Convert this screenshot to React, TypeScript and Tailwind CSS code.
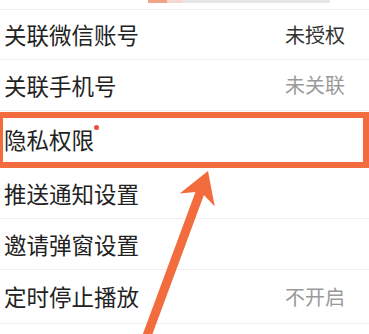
import React from "react";

type Row = { label: string; value?: string; muted?: boolean; dot?: boolean; h: string };

const rows: Row[] = [
  { label: "关联微信账号", value: "未授权", h: "h-[50px]" },
  { label: "关联手机号", value: "未关联", muted: true, h: "h-[51px]" },
  { label: "隐私权限", dot: true, h: "h-[57px]" },
  { label: "推送通知设置", h: "h-[51px]" },
  { label: "邀请弹窗设置", h: "h-[51px]" },
  { label: "定时停止播放", value: "不开启", muted: true, h: "h-[54px]" },
  { label: "", h: "h-[20px]" },
];

function Arrow() {
  // tip, wings and shaft computed along the arrow axis
  const ux = 0.347;
  const uy = -0.9375;
  const nx = 0.9375;
  const ny = 0.347;
  const tip = [208, 171];
  const at = (back: number, side: number) =>
    `${tip[0] - ux * back + nx * side},${tip[1] - uy * back + ny * side}`;
  const bottom = 180;
  const pts = [
    at(0, 0),
    at(31, 18.7),
    at(24, 4.5),
    at(bottom, 4.5),
    at(bottom, -4.5),
    at(24, -4.5),
    at(31, -18.7),
  ].join(" ");
  return (
    <svg className="absolute left-0 top-0 pointer-events-none" width="369" height="334" viewBox="0 0 369 334">
      <polygon points={pts} fill="#f36c3d" />
    </svg>
  );
}

export default function App() {
  return (
    <div
      className="relative w-[369px] h-[334px] overflow-hidden bg-white"
      style={{ fontFamily: '"Noto Sans CJK SC", "Noto Sans", sans-serif' }}
    >
      {/* bottom edge of the card above */}
      <div className="h-[10px] border-b border-[#f1f1f1] flex items-start">
        <div className="ml-[148px] w-[182px] h-[3px] flex">
          <div className="w-[19px] bg-[#f0a585]" />
          <div className="w-[16px] bg-[#f5d7cf]" />
          <div className="flex-1 bg-[#e6e6e6]" />
        </div>
      </div>

      {rows.map((r, i) => (
        <div
          key={i}
          className={`${r.h} flex items-center justify-between pl-[4px] pr-[24px] border-b border-[#eeeeee]`}
        >
          <div className="relative text-[22.5px] leading-none text-[#222222]">
            {r.label}
            {r.dot && (
              <span className="absolute -right-[5px] top-[-3px] w-[5px] h-[5px] rounded-full bg-[#e8503a]" />
            )}
          </div>
          {r.value && (
            <div className={`text-[20px] leading-none ${r.muted ? "text-[#9a9a9a]" : "text-[#333333]"}`}>
              {r.value}
            </div>
          )}
        </div>
      ))}

      {/* highlight box */}
      <div className="absolute left-[-3px] top-[112px] w-[372px] h-[56px] border-[6px] border-[#f36c3d] pointer-events-none" />
      <Arrow />
    </div>
  );
}
